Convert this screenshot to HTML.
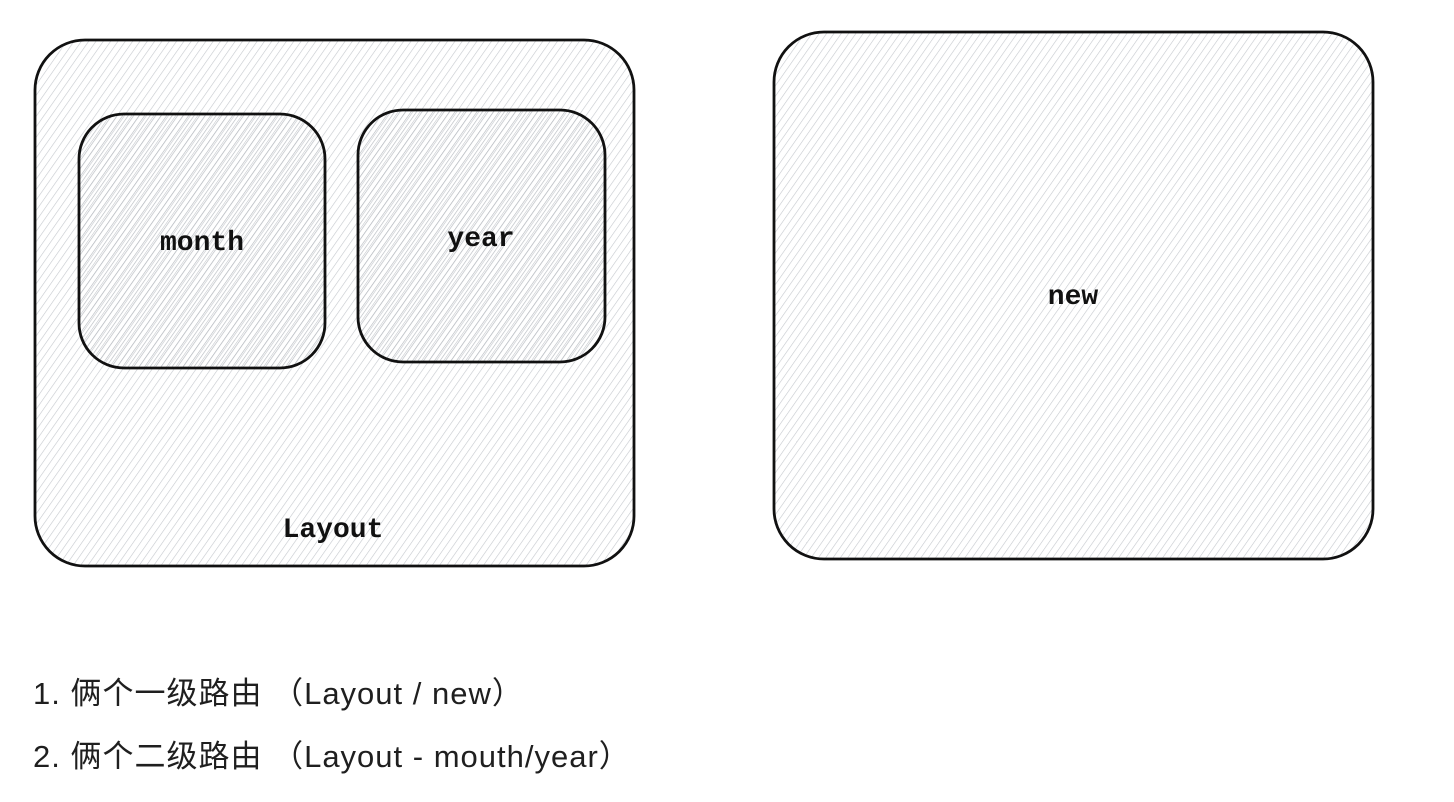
<!DOCTYPE html>
<html><head><meta charset="utf-8"><style>
html,body{margin:0;padding:0;background:#fff;width:1454px;height:802px;overflow:hidden}
.t{position:absolute;left:33px;font-family:"Liberation Sans","Noto Sans CJK SC",sans-serif;font-size:31px;color:#1f1f1f;white-space:pre;letter-spacing:1px}
</style></head><body>
<svg width="1454" height="802" style="position:absolute;left:0;top:0">
<defs>
<pattern id="h" width="6" height="6" patternUnits="userSpaceOnUse" patternTransform="rotate(35)">
<line x1="0" y1="0" x2="0" y2="6" stroke="#c4c8cd" stroke-width="1.2"/>
</pattern>
<pattern id="h2" width="4.5" height="4.5" patternUnits="userSpaceOnUse" patternTransform="rotate(35)">
<line x1="0" y1="0" x2="0" y2="4.5" stroke="#b8bcc1" stroke-width="1.3"/>
</pattern>
</defs>
<g stroke="#111" stroke-width="2.8">
<rect x="35" y="40" width="599" height="526" rx="50" fill="url(#h)"/>
<rect x="79" y="114" width="246" height="254" rx="45" fill="url(#h2)"/>
<rect x="358" y="110" width="247" height="252" rx="45" fill="url(#h2)"/>
<rect x="774" y="32" width="599" height="527" rx="50" fill="url(#h)"/>
</g>
<g font-family="Liberation Mono,monospace" font-weight="bold" font-size="28" fill="#111" text-anchor="middle">
<text x="202" y="250">month</text>
<text x="481" y="246">year</text>
<text x="1073" y="304">new</text>
<text x="333" y="537">Layout</text>
</g>
</svg>
<div class="t" style="top:668px">1. 俩个一级路由 （Layout / new）</div>
<div class="t" style="top:731px">2. 俩个二级路由 （Layout - mouth/year）</div>
</body></html>
